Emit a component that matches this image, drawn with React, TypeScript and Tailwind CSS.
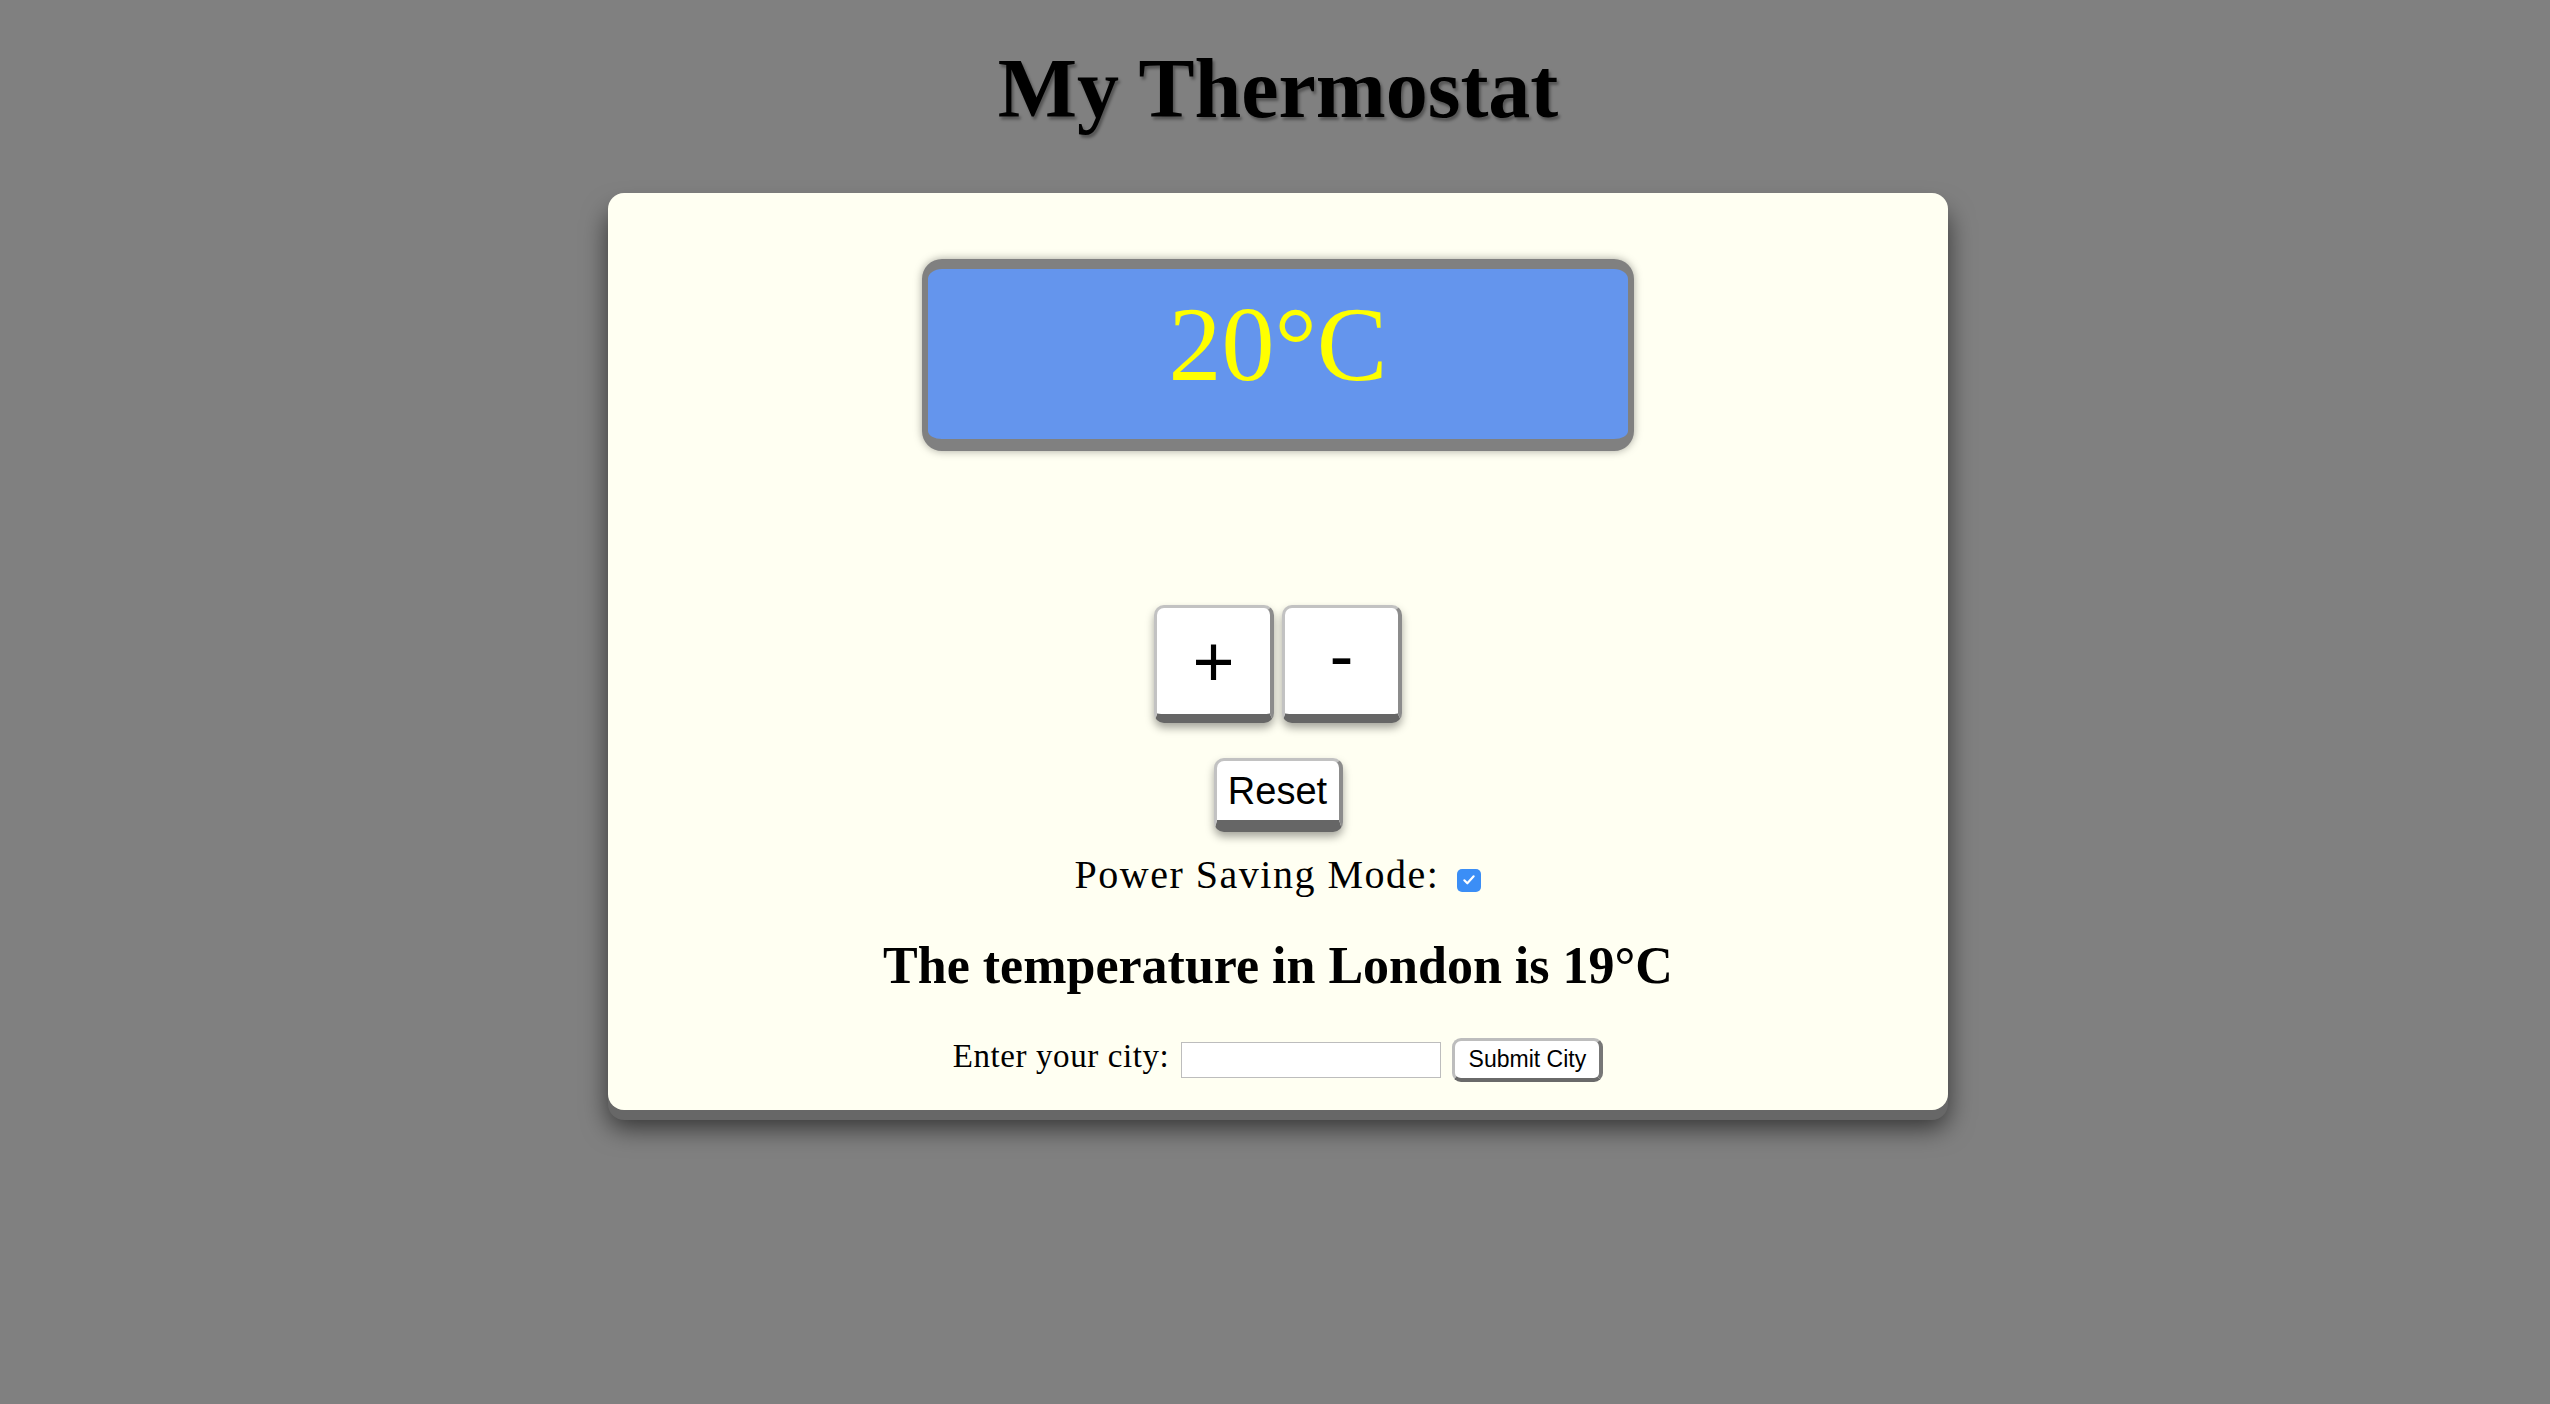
import { useState } from 'react';

function KeyButton({ label, className, textClass, onClick }: { label: string; className: string; textClass: string; onClick?: () => void }) {
  return (
    <button
      onClick={onClick}
      className={`flex items-center justify-center bg-white rounded-[10px] border-t-[3px] border-l-[3px] border-r-[4px] border-t-[#c2c2c2] border-l-[#c2c2c2] border-r-[#8c8c8c] border-b-[#666666] shadow-[0_5px_9px_rgba(0,0,0,0.35)] font-['Liberation_Sans',Arial,sans-serif] text-black leading-none ${className}`}
    >
      <span className={textClass}>{label}</span>
    </button>
  );
}

export default function App() {
  const [temp, setTemp] = useState(20);
  const [saving, setSaving] = useState(true);
  const [city, setCity] = useState('');

  return (
    <div className="min-h-screen bg-[#808080] pt-[47px] pl-[6px] font-['Liberation_Serif','Times_New_Roman',serif] text-black">
      <h1 className="text-center text-[84px] font-bold leading-none [text-shadow:2px_3px_3px_rgba(0,0,0,0.35)]">My Thermostat</h1>

      <div className="mx-auto mt-[62px] flex w-[1340px] flex-col items-center rounded-[16px] bg-[#fffff2] pt-[66px] pb-[28px] shadow-[0_10px_0_#676767,0_18px_26px_rgba(0,0,0,0.6)]">
        {/* display */}
        <div className="h-[192px] w-[712px] rounded-[20px] border-x-[6px] border-t-[10px] border-b-[12px] border-[#808080] bg-[#6495ed] pt-[23px] text-center shadow-[0_0_8px_rgba(0,0,0,0.35)]">
          <span className="text-[106px] leading-none text-[#ffff00]">{temp}°C</span>
        </div>

        <div className="mt-[154px] flex gap-[8px]">
          <KeyButton label="+" onClick={() => setTemp(temp + 1)} className="h-[118px] w-[120px] border-b-[9px]" textClass="text-[72px]" />
          <KeyButton label="-" onClick={() => setTemp(temp - 1)} className="h-[118px] w-[120px] border-b-[9px] pb-[12px]" textClass="text-[72px]" />
        </div>

        <KeyButton label="Reset" onClick={() => setTemp(20)} className="mt-[35px] h-[74px] w-[129px] border-b-[12px]" textClass="text-[38px]" />

        <div className="mt-[20px] flex items-center gap-[18px]">
          <span className="text-[40px] leading-[46px] tracking-[1.5px]">Power Saving Mode:</span>
          <button
            onClick={() => setSaving(!saving)}
            className={`mt-[10px] flex h-[23px] w-[24px] items-center justify-center rounded-[5px] ${saving ? 'bg-[#3b8ef6]' : 'border-2 border-[#767676] bg-white'}`}
          >
            {saving && (
              <svg viewBox="0 0 24 24" className="h-[16px] w-[16px]" fill="none" stroke="white" strokeWidth="3.2" strokeLinecap="round" strokeLinejoin="round">
                <path d="M5 12.5l4.5 4.5L19 6.5" />
              </svg>
            )}
          </button>
        </div>

        <h2 className="mt-[42px] text-[52px] font-bold leading-none">The temperature in London is 19°C</h2>

        <div className="mt-[46px] flex h-[44px] items-center">
          <span className="pb-[8px] text-[33px] leading-none tracking-[0.6px]">Enter your city:</span>
          <input
            value={city}
            onChange={(e) => setCity(e.target.value)}
            className="ml-[12px] h-[36px] w-[260px] border border-[#bdbdbd] bg-white px-2 text-[20px] outline-none"
          />
          <button className="ml-[11px] h-[44px] w-[151px] rounded-[9px] border-t-[3px] border-l-[3px] border-r-[4px] border-b-[4px] border-t-[#bdbdbd] border-l-[#bdbdbd] border-r-[#777] border-b-[#6a6a6a] bg-white font-['Liberation_Sans',Arial,sans-serif] text-[23px] leading-none text-black">
            Submit City
          </button>
        </div>
      </div>
    </div>
  );
}
